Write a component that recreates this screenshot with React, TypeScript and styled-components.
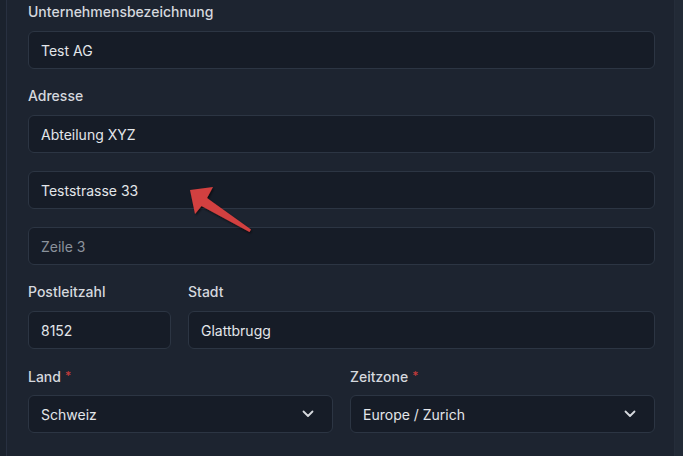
import React from "react";
import styled, { createGlobalStyle } from "styled-components";

const Global = createGlobalStyle`
  html, body { margin: 0; padding: 0; background: #1c232f; }
  body { font-family: Inter, "Noto Sans", "Liberation Sans", sans-serif; -webkit-font-smoothing: antialiased; }
  * { box-sizing: border-box; }
`;

const Page = styled.div`
  display: flex;
  height: 456px;
  overflow: hidden;
  background: #1c232f;
`;

const Gutter = styled.div`
  width: 6px;
  flex: none;
  background: #1b222d;
`;

const Panel = styled.div`
  position: relative;
  width: 668px;
  flex: none;
  border-left: 1px solid #283040;
  background: #1d2430;
  padding: 2px 19px 0 21px;
  display: flex;
  flex-direction: column;
  gap: 17px;
`;

const RightStrip = styled.div`
  flex: 1;
  background: #222a36;
  border-left: 1px solid #252d3a;
`;

const Field = styled.div`
  display: flex;
  flex-direction: column;
  gap: 9px;
`;

const Stack = styled.div`
  display: flex;
  flex-direction: column;
  gap: 18px;
`;

const Row = styled.div<{ $cols: string }>`
  display: grid;
  grid-template-columns: ${(p) => p.$cols};
  gap: 17px;
`;

const Label = styled.div`
  font-size: 14px;
  line-height: 20px;
  font-weight: 500;
  color: #d5d8de;
  height: 20px;
`;

const Req = styled.span`
  color: #c23b3b;
  margin-left: 4px;
  font-size: 12px;
  vertical-align: 2px;
`;

const Box = styled.div<{ $placeholder?: boolean }>`
  height: 38px;
  border: 1px solid #2c3543;
  border-radius: 6px;
  background: #161c27;
  display: flex;
  align-items: center;
  justify-content: space-between;
  padding: 0 18px 0 12px;
  font-size: 14px;
  color: ${(p) => (p.$placeholder ? "#8b929c" : "#e3e6ea")};
`;

const Chevron = () => (
  <svg width="12" height="8" viewBox="0 0 12 8" fill="none">
    <path d="M1.5 1.5 L6 6 L10.5 1.5" stroke="#d6d9de" strokeWidth="1.8" strokeLinecap="round" strokeLinejoin="round" />
  </svg>
);

const ArrowLayer = styled.svg`
  position: absolute;
  left: -7px;
  top: 0;
  pointer-events: none;
`;

const Arrow = () => (
  <ArrowLayer width="683" height="456" viewBox="0 0 683 456">
    <defs>
      <filter id="sh" x="-20%" y="-20%" width="140%" height="140%">
        <feDropShadow dx="1" dy="1.5" stdDeviation="1.2" floodColor="#000" floodOpacity="0.6" />
      </filter>
    </defs>
    <polygon
      points="190,190 213,187 207,198 251,229.5 249.5,232 201.5,206 195,214"
      fill="#d2403f"
      filter="url(#sh)"
    />
  </ArrowLayer>
);

export default function App() {
  return (
    <>
      <Global />
      <Page>
        <Gutter />
        <Panel>
          <Field>
            <Label>Unternehmensbezeichnung</Label>
            <Box>Test AG</Box>
          </Field>
          <Field>
            <Label>Adresse</Label>
            <Stack>
              <Box>Abteilung XYZ</Box>
              <Box>Teststrasse 33</Box>
              <Box $placeholder>Zeile 3</Box>
            </Stack>
          </Field>
          <Row $cols="143px 1fr">
            <Field>
              <Label>Postleitzahl</Label>
              <Box>8152</Box>
            </Field>
            <Field>
              <Label>Stadt</Label>
              <Box>Glattbrugg</Box>
            </Field>
          </Row>
          <Row $cols="1fr 1fr">
            <Field>
              <Label>
                Land<Req>*</Req>
              </Label>
              <Box>
                Schweiz
                <Chevron />
              </Box>
            </Field>
            <Field>
              <Label>
                Zeitzone<Req>*</Req>
              </Label>
              <Box>
                Europe / Zurich
                <Chevron />
              </Box>
            </Field>
          </Row>
          <Arrow />
        </Panel>
        <RightStrip />
      </Page>
    </>
  );
}
